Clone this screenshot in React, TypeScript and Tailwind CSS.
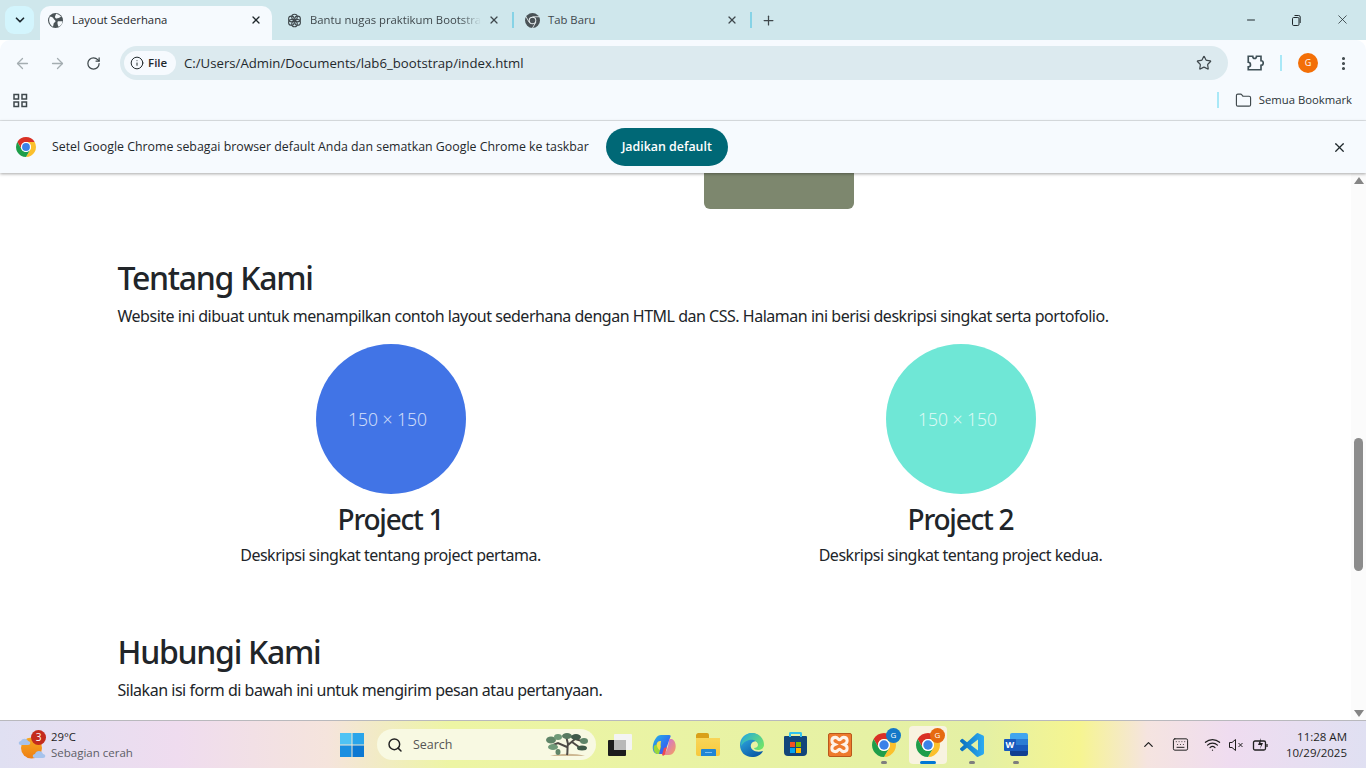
import React from 'react';
import { ArrowLeft, ArrowRight, RotateCw, Info, Star, MoreVertical, Folder, ChevronDown, ChevronUp, X, Plus, Minus, Search, Wifi, Keyboard } from 'lucide-react';

const ui = "font-['Open_Sans',sans-serif]";

const ChromeLogo = ({ size = 20 }: { size?: number }) => (
  <svg width={size} height={size} viewBox="0 0 24 24">
    <path d="M1.610 6A12 12 0 0 1 22.390 6H12A6 6 0 0 0 6.804 15z" fill="#d93025" />
    <path d="M22.390 6A12 12 0 0 1 12 24L17.196 15A6 6 0 0 0 12 6z" fill="#fbc02d" />
    <path d="M12 24A12 12 0 0 1 1.610 6L6.804 15A6 6 0 0 0 17.196 15z" fill="#1e9e4a" />
    <circle cx="12" cy="12" r="6" fill="#fff" />
    <circle cx="12" cy="12" r="4.700" fill="#3b82e8" />
  </svg>
);

const GreyChrome = () => (
  <svg width="15" height="15" viewBox="0 0 24 24">
    <circle cx="12" cy="12" r="12" fill="#4a5357" />
    <path d="M12 6h10.400M6.800 15 1.600 6M17.200 15 12 24" stroke="#f0f6f8" strokeWidth="1.300" />
    <circle cx="12" cy="12" r="6" fill="#f0f6f8" />
    <circle cx="12" cy="12" r="4.500" fill="#4a5357" />
  </svg>
);

const Globe = () => (
  <svg width="15" height="15" viewBox="0 0 24 24">
    <circle cx="12" cy="12" r="12" fill="#4a5357" />
    <path d="M3 6c3 0 5 1 6 3s3 2 3 4-3 2-3 4l-1 5C3 19 0 12 3 6zM13 1c3 1 6 2 8 5l-4 2c-2 0-3 2-5 0s0-4 1-7zM16 13h7c0 4-2 7-6 9-1-2-3-7-1-9z" fill="#f6fafd" />
  </svg>
);

const OpenAi = () => (
  <svg width="15" height="15" viewBox="0 0 24 24" fill="none" stroke="#3f484c" strokeWidth="1.700">
    <circle cx="12" cy="6.500" r="4.500" />
    <circle cx="7" cy="9.500" r="4.500" />
    <circle cx="7" cy="15" r="4.500" />
    <circle cx="12" cy="17.500" r="4.500" />
    <circle cx="17" cy="15" r="4.500" />
    <circle cx="17" cy="9.500" r="4.500" />
  </svg>
);

const TopStrip = () => (
  <div className="flex h-[40px] shrink-0 bg-[#cfe7ec]">
    <div className="ml-[5px] mt-[6px] flex h-[28px] w-[29px] items-center justify-center rounded-[9px] bg-[#d3f5fd]">
      <ChevronDown size={14} strokeWidth={3} className="text-[#1d2a30]" />
    </div>
    <div className="ml-[6px] mt-[6px] flex h-[34px] w-[232px] items-center rounded-t-[10px] bg-[#f6fafe] pb-[6px] pl-[8px] pr-[10px]">
      <Globe />
      <span className="ml-[9px] mt-[1px] text-[11.300px] text-[#1f282c]">Layout Sederhana</span>
      <X size={12} strokeWidth={2.600} className="ml-auto text-[#1f282c]" />
    </div>
    <div className="mt-[6px] flex h-[34px] items-center pb-[6px]">
      <div className="flex h-full w-[240px] items-center pl-[15px] pr-[12px]">
        <OpenAi />
        <span className="ml-[8px] mt-[1px] whitespace-nowrap text-[11.300px] text-[#3f484c] [mask-image:linear-gradient(90deg,#000_88%,transparent)]">Bantu nugas praktikum Bootstra</span>
        <X size={12} strokeWidth={2.400} className="ml-auto text-[#3f484c]" />
      </div>
      <div className="h-[16px] w-[2px] bg-[#86d3e6]" />
      <div className="flex h-full w-[236px] items-center pl-[11px] pr-[12px]">
        <GreyChrome />
        <span className="ml-[8px] mt-[1px] text-[11.300px] text-[#3f484c]">Tab Baru</span>
        <X size={12} strokeWidth={2.400} className="ml-auto text-[#3f484c]" />
      </div>
      <div className="h-[16px] w-[2px] bg-[#86d3e6]" />
      <Plus size={15} strokeWidth={2} className="ml-[9px] text-[#3f484c]" />
    </div>
    <div className="ml-auto flex items-center pb-[1px] text-[#1f282c]">
      <Minus size={12} strokeWidth={2} className="mr-[33px]" />
      <svg width="12" height="12" viewBox="0 0 12 12" fill="none" stroke="currentColor" strokeWidth="1" className="mr-[33px]">
        <rect x="2.500" y="3.500" width="6.500" height="8" rx="1.200" />
        <path d="M4.500 1.500h4.200a1.500 1.500 0 0 1 1.500 1.500v6" />
      </svg>
      <X size={15} strokeWidth={1.200} className="mr-[16px]" />
    </div>
  </div>
);

const AddressRow = () => (
  <div className="flex h-[40px] shrink-0 items-center rounded-t-[10px] bg-[#f6fafe] pt-[6px]">
    <ArrowLeft size={17} strokeWidth={1.800} className="ml-[14px] text-[#a4adb1]" />
    <ArrowRight size={17} strokeWidth={1.800} className="ml-[18px] text-[#a4adb1]" />
    <RotateCw size={15} strokeWidth={2} className="ml-[20px] text-[#3f484c]" />
    <div className="ml-[19px] flex h-[34px] w-[1108px] items-center rounded-full bg-[#dceaef] pl-[4px] pr-[16px]">
      <div className="flex h-[24px] w-[52px] items-center rounded-full bg-[#f6fafe] pl-[6px]">
        <Info size={14} strokeWidth={1.700} className="text-[#1f282c]" />
        <span className="ml-[4px] text-[11.500px] font-semibold text-[#1f282c]">File</span>
      </div>
      <span className="ml-[8px] mt-[1px] text-[13.200px] text-[#1f282c]">C:/Users/Admin/Documents/lab6_bootstrap/index.html</span>
      <Star size={16} strokeWidth={1.800} className="ml-auto text-[#3f484c]" />
    </div>
    <svg width="18" height="18" viewBox="0 0 24 24" fill="none" stroke="#3f5057" strokeWidth="2.200" className="ml-[18px]">
      <path d="M4 3h5c0 2 1 3 2.500 3S14 5 14 3h6v6c2 0 3 1 3 3s-1 3-3 3v6H3v-4c2 0 3-1 3-2.500S5 11 3 11V3z" />
    </svg>
    <div className="ml-[16px] h-[16px] w-[2px] bg-[#a9e8f7]" />
    <div className="ml-[16px] flex h-[20px] w-[20px] items-center justify-center rounded-full bg-[#f36f07] text-[9px] text-white">G</div>
    <MoreVertical size={17} strokeWidth={2.400} className="ml-[17px] text-[#3f484c]" />
  </div>
);

const BookmarkRow = () => (
  <div className="flex h-[41px] shrink-0 items-center border-b border-[#e1e5e8] bg-[#f6fafe]">
    <svg width="15" height="15" viewBox="0 0 15 15" fill="none" stroke="#3f484c" strokeWidth="1.500" className="ml-[13px]">
      <rect x="1" y="1.500" width="4.500" height="4.500" />
      <rect x="9" y="1.500" width="4.500" height="4.500" />
      <rect x="1" y="9" width="4.500" height="4.500" />
      <rect x="9" y="9" width="4.500" height="4.500" />
    </svg>
    <div className="ml-auto h-[16px] w-[2px] bg-[#a9e8f7]" />
    <Folder size={17} strokeWidth={1.600} className="ml-[16px] text-[#3f484c]" />
    <span className="ml-[7px] mr-[14px] text-[11.300px] text-[#2a3337]">Semua Bookmark</span>
  </div>
);

const InfoBar = () => (
  <div className="z-10 flex h-[52px] shrink-0 items-center bg-[#f6fafe] shadow-[0_1px_3px_rgba(0,0,0,0.35)]">
    <div className="ml-[16px] flex"><ChromeLogo /></div>
    <span className="ml-[16px] mt-[1px] text-[12.350px] text-[#1f282c]">Setel Google Chrome sebagai browser default Anda dan sematkan Google Chrome ke taskbar</span>
    <button className="ml-[17px] h-[38px] w-[122px] rounded-full bg-[#006876] text-[12.400px] font-semibold text-white">Jadikan default</button>
    <X size={15} strokeWidth={2} className="ml-auto mr-[19px] text-[#1f282c]" />
  </div>
);

const Project = ({ color, title, desc }: { color: string; title: string; desc: string }) => (
  <div className="flex flex-col items-center text-center">
    <div className={`flex h-[150px] w-[150px] items-center justify-center rounded-full pr-[6px] font-['Open_Sans',sans-serif] text-[17.500px] font-light tracking-normal text-white/80 ${color}`}>150 × 150</div>
    <h3 className="mt-[8px] text-[28px] font-medium leading-[34px] tracking-[-0.044em] text-[#212529]">{title}</h3>
    <p className="mt-[7px] text-[16px] leading-[24px] text-[#212529]">{desc}</p>
  </div>
);

const Page = () => (
  <div className="flex min-h-0 flex-1 overflow-hidden bg-white">
    <div className="min-w-0 flex-1 overflow-hidden">
      <div className="mx-auto w-[1140px] px-[12px] font-['Noto_Sans',sans-serif] tracking-[-0.03em]">
        <div className="ml-[586px] h-[36px] w-[150px] rounded-b-[6px] bg-[#7d876e]" />
        <h2 className="mt-[50px] text-[32px] font-medium leading-[38px] tracking-[-0.04em] text-[#212529]">Tentang Kami</h2>
        <p className="mt-[7px] text-[16px] leading-[24px] text-[#212529]">Website ini dibuat untuk menampilkan contoh layout sederhana dengan HTML dan CSS. Halaman ini berisi deskripsi singkat serta portofolio.</p>
        <div className="-mx-[12px] mt-[16px] grid grid-cols-2">
          <Project color="bg-[#4174e6]" title="Project 1" desc="Deskripsi singkat tentang project pertama." />
          <Project color="bg-[#6fe7d6]" title="Project 2" desc="Deskripsi singkat tentang project kedua." />
        </div>
        <h2 className="mt-[66px] text-[32px] font-medium leading-[38px] tracking-[-0.04em] text-[#212529]">Hubungi Kami</h2>
        <p className="mt-[7px] text-[16px] leading-[24px] text-[#212529]">Silakan isi form di bawah ini untuk mengirim pesan atau pertanyaan.</p>
      </div>
    </div>
    <div className="flex w-[15px] shrink-0 flex-col items-center bg-[#fbfbfb]">
      <div className="mt-[4px] h-0 w-0 border-x-[5px] border-b-[7px] border-x-transparent border-b-[#858585]" />
      <div className="mt-[254px] h-[133px] w-[9px] rounded-full bg-[#8c8c8c]" />
      <div className="mt-auto mb-[3px] h-0 w-0 border-x-[5px] border-t-[7px] border-x-transparent border-t-[#858585]" />
    </div>
  </div>
);

const Dot = () => <div className="absolute -bottom-[7px] left-[9px] h-[3px] w-[6px] rounded-full bg-[#7e7e7e]" />;

const AppIcons = () => (
  <div className="flex items-center">
    {/* task view */}
    <div className="relative ml-[12px] h-[24px] w-[24px]">
      <div className="absolute right-0 top-[1px] h-[16px] w-[18px] rounded-[1px] bg-[#f4f4f4]" />
      <div className="absolute left-0 top-[7px] h-[16px] w-[18px] rounded-[1px] bg-[#1c1c1c]" />
      <div className="absolute left-[6px] top-[7px] h-[10px] w-[12px] bg-[#b9b9b9]" />
    </div>
    {/* copilot */}
    <svg width="25" height="24" viewBox="0 0 25 24" className="ml-[20px]">
      <defs>
        <linearGradient id="cpA" x1="0" y1="0" x2="1" y2="1"><stop offset="0" stopColor="#27b6e6" /><stop offset="0.6" stopColor="#2f6ff0" /><stop offset="1" stopColor="#6a3de8" /></linearGradient>
        <linearGradient id="cpB" x1="0" y1="0" x2="1" y2="1"><stop offset="0" stopColor="#c86ae8" /><stop offset="1" stopColor="#f7a05a" /></linearGradient>
      </defs>
      <path d="M9 2h8c2 0 2 1 1 3l-5 14c-1 2-2 2-4 2H6C2 21 0 17 1 12 2 7 5 2 9 2z" fill="url(#cpA)" />
      <path d="M2 13c2-2 5-2 7 0l-2 8H5c-3-1-4-5-3-8z" fill="#9bd83a" />
      <path d="M5 10c1-2 3-2 4-2l-1 9c-2 0-4-5-3-7z" fill="#f6e04a" />
      <path d="M17 6h3c4 2 5 9 2 13-1 2-3 3-5 3h-5c-1 0 0-1 1-2 2-2 4-9 4-14z" fill="url(#cpB)" />
      <path d="M12 15l3-1-2 7c-1 2-2 2-3 1z" fill="#ee4a50" />
    </svg>
    {/* explorer */}
    <div className="relative ml-[19px] h-[23px] w-[24px] overflow-hidden rounded-[2px]">
      <div className="h-[5px] w-[13px] rounded-t-[2px] bg-[#d9a019]" />
      <div className="h-[18px] w-[24px] bg-gradient-to-b from-[#f8d558] to-[#f7c93c]" />
      <div className="absolute bottom-0 left-[5px] h-[7px] w-[15px] rounded-t-[1px] bg-[#1f86d6]" />
      <div className="absolute bottom-[3px] left-[9px] h-[1px] w-[7px] bg-[#7fc0ee]" />
    </div>
    {/* edge */}
    <svg width="24" height="24" viewBox="0 0 24 24" className="ml-[20px]">
      <defs>
        <linearGradient id="edA" x1="0" y1="0" x2="0.6" y2="1"><stop offset="0" stopColor="#35b8ea" /><stop offset="1" stopColor="#0c5ca8" /></linearGradient>
        <linearGradient id="edB" x1="0" y1="0" x2="1" y2="0.700"><stop offset="0" stopColor="#1fa8e0" /><stop offset="1" stopColor="#6fe36a" /></linearGradient>
      </defs>
      <path d="M12 0C5 0 0 5 0 12s5 12 12 12c5 0 9-2 11-6-3 1-8 1-10-1-3-2-3-6 0-8 2-1 4-1 5 1l5 2c0-7-5-12-11-12z" fill="url(#edA)" />
      <path d="M12 0c7 0 12 5 12 12 0 3-3 5-6 5-2 0-4-1-4-2 2 0 4-1 4-3 0-4-5-6-9-5-4 1-6 3-8 6 0-7 5-13 11-13z" fill="url(#edB)" />
    </svg>
    {/* store */}
    <div className="relative ml-[20px] mt-[3px] h-[20px] w-[23px] rounded-b-[4px] rounded-t-[1px] bg-[#12457a]">
      <div className="absolute -top-[4px] left-[5px] h-[5px] w-[13px] rounded-t-[2px] border-2 border-b-0 border-[#32c2ee]" />
      <div className="absolute left-[6px] top-[6px] grid grid-cols-2 gap-[1px]">
        <div className="h-[5px] w-[5px] bg-[#f25022]" />
        <div className="h-[5px] w-[5px] bg-[#7fba00]" />
        <div className="h-[5px] w-[5px] bg-[#00a4ef]" />
        <div className="h-[5px] w-[5px] bg-[#ffb900]" />
      </div>
    </div>
    {/* xampp */}
    <div className="ml-[21px] flex h-[24px] w-[24px] items-center justify-center rounded-[2px] border border-[#b9581c] bg-[#ee7a2d]">
      <svg width="19" height="19" viewBox="0 0 24 24" fill="none" stroke="#fdf3ea" strokeWidth="3.800">
        <path d="M7 3C1 3 1 10 6 12c-5 2-5 9 1 9 3 0 3-3 5-3s2 3 5 3c6 0 6-7 1-9 5-2 5-9-1-9-3 0-3 3-5 3S10 3 7 3z" />
      </svg>
    </div>
    {/* chrome with blue profile */}
    <div className="relative ml-[20px] flex h-[24px] w-[24px]">
      <ChromeLogo size={24} />
      <div className="absolute -right-[5px] -top-[5px] flex h-[15px] w-[15px] items-center justify-center rounded-full bg-[#1478c8] text-[8px] text-white">G</div>
      <Dot />
    </div>
    {/* active chrome */}
    <div className="relative ml-[13px] flex h-[38px] w-[38px] items-center justify-center rounded-[4px] bg-[#f8f3e0]">
      <ChromeLogo size={24} />
      <div className="absolute right-[2px] top-[2px] flex h-[15px] w-[15px] items-center justify-center rounded-full bg-[#e66a10] text-[8px] text-white">G</div>
      <div className="absolute bottom-0 left-[11px] h-[3px] w-[16px] rounded-full bg-[#0078d4]" />
    </div>
    {/* vscode */}
    <div className="relative ml-[13px] flex h-[24px] w-[24px]">
      <svg width="24" height="24" viewBox="0 0 24 24">
        <defs>
          <linearGradient id="vsA" x1="0" y1="0" x2="1" y2="0"><stop offset="0" stopColor="#0a6fbd" /><stop offset="1" stopColor="#2cabf2" /></linearGradient>
        </defs>
        <path d="M23.150 2.587L18.210.21a1.494 1.494 0 0 0-1.705.29l-9.460 8.630-4.120-3.128a.999.999 0 0 0-1.276.057L.327 7.261A1 1 0 0 0 .326 8.740L3.899 12 .326 15.260a1 1 0 0 0 .001 1.479L1.650 17.940a.999.999 0 0 0 1.276.057l4.120-3.128 9.460 8.630a1.492 1.492 0 0 0 1.704.290l4.942-2.377A1.500 1.500 0 0 0 24 20.060V3.939a1.500 1.500 0 0 0-.850-1.352zm-5.146 14.861L10.826 12l7.178-5.448v10.896z" fill="url(#vsA)" />
      </svg>
      <Dot />
    </div>
    {/* word */}
    <div className="relative ml-[20px] h-[24px] w-[24px]">
      <div className="ml-[6px] flex h-[23px] w-[18px] flex-col overflow-hidden rounded-[2px]">
        <div className="h-[6px] bg-[#41a5ee]" />
        <div className="h-[6px] bg-[#2b7cd3]" />
        <div className="h-[6px] bg-[#185abd]" />
        <div className="h-[5px] bg-[#103f91]" />
      </div>
      <div className="absolute left-0 top-[6px] flex h-[12px] w-[12px] items-center justify-center rounded-[1px] bg-[#185abd] text-[9px] font-bold text-white">W</div>
      <Dot />
    </div>
  </div>
);

const Taskbar = () => (
  <div className="flex h-[48px] shrink-0 items-center border-t border-[#b9b9bd] bg-[linear-gradient(90deg,#e0e0f2_0%,#efdcef_13%,#f5e4dc_24%,#edf5a4_33%,#e4f0a4_72%,#f6f590_79%,#f5e4e0_84%,#efdcf0_90%,#e0e0f2_100%)] text-[#1f1f1f]">
    <div className={`relative flex items-center ${ui}`}>
      <div className="relative ml-[18px] h-[30px] w-[28px]">
        <svg width="28" height="30" viewBox="0 0 28 30" className="absolute inset-0">
          <defs>
            <linearGradient id="sun" x1="0" y1="0" x2="0" y2="1"><stop offset="0" stopColor="#f6a821" /><stop offset="1" stopColor="#ee7f14" /></linearGradient>
          </defs>
          <circle cx="13.500" cy="18" r="10.500" fill="url(#sun)" />
          <path d="M3 15c-3 0-3-4 0-4 1-3 6-3 7 0 3 0 3 4 0 4z" fill="#a6c3ec" />
          <path d="M17 28c-3 0-3-4 0-4 1-4 7-4 8 0 3 0 3 4 0 4z" fill="#a6c3ec" />
        </svg>
        <div className="absolute left-[13px] top-0 flex h-[15px] w-[15px] items-center justify-center rounded-full bg-[#c42b1c] text-[10px] text-white">3</div>
      </div>
      <div className="ml-[5px] flex flex-col leading-[16px]">
        <span className="text-[11.300px] text-[#1f1f1f]">29°C</span>
        <span className="text-[11.500px] text-[#5d5d66]">Sebagian cerah</span>
      </div>
    </div>
    <svg width="24" height="24" viewBox="0 0 24 24" className="ml-[207px]">
      <rect x="0" y="0" width="11.500" height="11.500" fill="#4fc3f4" />
      <rect x="12.500" y="0" width="11.500" height="11.500" fill="#2aa5ea" />
      <rect x="0" y="12.500" width="11.500" height="11.500" fill="#1a8fe0" />
      <rect x="12.500" y="12.500" width="11.500" height="11.500" fill="#0c78d2" />
    </svg>
    <div className={`relative ml-[13px] flex h-[31px] w-[219px] items-center rounded-full bg-[#f8f9e2] pl-[10px] ${ui}`}>
      <Search size={16} strokeWidth={2.200} className="text-[#222]" />
      <span className="ml-[10px] mt-[1px] text-[12.500px] text-[#555]">Search</span>
      <svg width="44" height="25" viewBox="0 0 44 25" className="ml-auto mr-[7px]" fill="none">
        <path d="M5 24c10-3 26-3 35 0z" fill="#cdb892" />
        <path d="M22 23c1-4 0-8 1-11M22 15 13 11 8 13M23 13 30 7 37 9M23 12 21 4M27 10 34 15" stroke="#4d4a45" strokeWidth="2" />
        <ellipse cx="6" cy="8" rx="5" ry="3.500" fill="#5f8568" />
        <ellipse cx="13" cy="5" rx="4" ry="3" fill="#6f9a78" />
        <ellipse cx="22" cy="4" rx="5" ry="3" fill="#587a5f" />
        <ellipse cx="31" cy="5" rx="5" ry="3" fill="#3f5a48" />
        <ellipse cx="39" cy="9" rx="4" ry="3" fill="#5f8568" />
        <ellipse cx="37" cy="16" rx="5" ry="2.500" fill="#3f5a48" />
        <ellipse cx="8" cy="15" rx="5" ry="3" fill="#6f9a78" />
        <ellipse cx="13" cy="20" rx="2.500" ry="3" fill="#5f8568" />
      </svg>
    </div>
    <AppIcons />
    <div className={`ml-auto flex items-center ${ui} text-[#1f1f1f]`}>
      <ChevronUp size={15} strokeWidth={2} />
      <Keyboard size={17} strokeWidth={1.400} className="ml-[16px]" />
      <Wifi size={17} strokeWidth={1.700} className="ml-[15px]" />
      <svg width="16" height="16" viewBox="0 0 16 16" fill="none" stroke="currentColor" strokeWidth="1" className="ml-[7px]">
        <path d="M1.500 5.500h2.500l3.500-3v11l-3.500-3h-2.500zM10.500 6l4 4M14.500 6l-4 4" />
      </svg>
      <svg width="17" height="17" viewBox="0 0 17 17" fill="none" stroke="currentColor" strokeWidth="1.300" className="ml-[8px]">
        <rect x="1.500" y="5" width="12" height="9" rx="1.500" />
        <path d="M15 8v3" />
        <path d="M9 2 6 9h3l-1 4 3-6H8.500z" fill="currentColor" stroke="none" />
      </svg>
      <div className="ml-[17px] mr-[19px] flex flex-col items-end text-[11.500px] leading-[16px]">
        <span>11:28 AM</span>
        <span>10/29/2025</span>
      </div>
    </div>
  </div>
);

export default function App() {
  return (
    <div className={`flex h-screen w-full flex-col overflow-hidden ${ui}`}>
      <TopStrip />
      <AddressRow />
      <BookmarkRow />
      <InfoBar />
      <Page />
      <Taskbar />
    </div>
  );
}
